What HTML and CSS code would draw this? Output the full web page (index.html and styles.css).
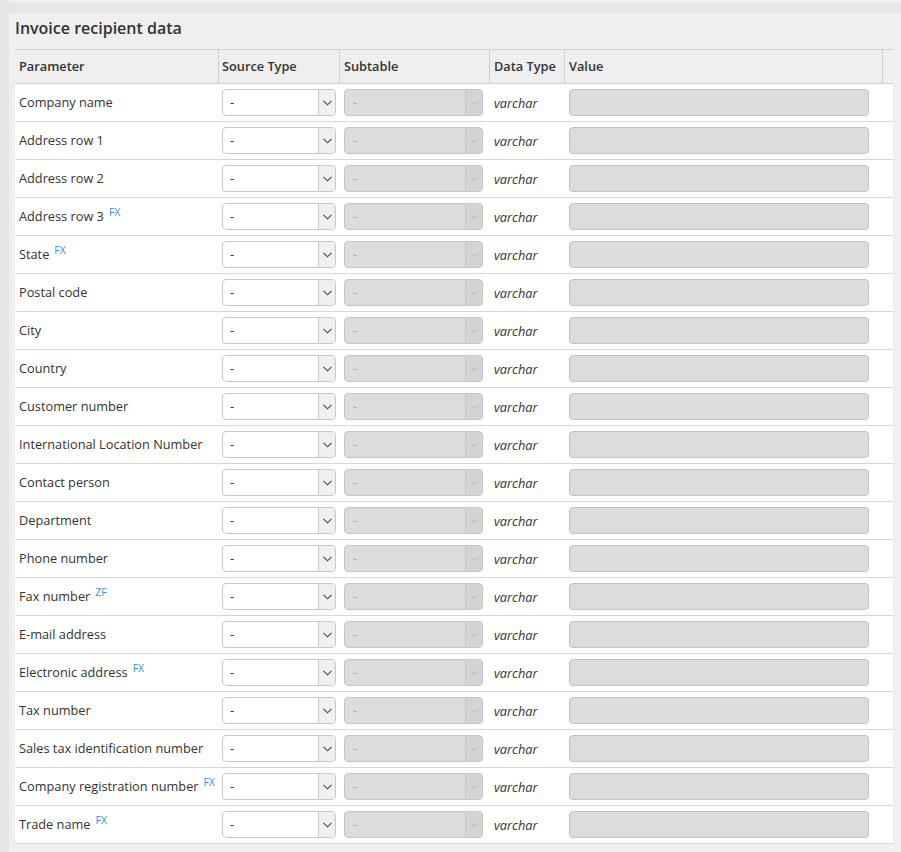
FILE: index.html
```html
<!DOCTYPE html>
<html>
<head>
<meta charset="utf-8">
<link rel="stylesheet" href="styles.css">
</head>
<body>
<div class="prev-panel"></div>
<div class="panel">
  <h2 class="title">Invoice recipient data</h2>
  <div class="table">
    <div class="row head">
      <div class="cell">Parameter</div>
      <div class="cell">Source Type</div>
      <div class="cell">Subtable</div>
      <div class="cell">Data Type</div>
      <div class="cell">Value</div>
      <div class="cell"></div>
    </div>
    <div id="rows"></div>
  </div>
</div>
<script src="script.js"></script>
</body>
</html>
```
FILE: styles.css
```css
html, body { margin: 0; padding: 0; }
body {
  background: #e6e6e6;
  font-family: "Open Sans", "Liberation Sans", sans-serif;
  font-size: 12.75px;
  color: #333;
  width: 901px;
  height: 852px;
  overflow: hidden;
}
.prev-panel {
  margin-left: 9px;
  height: 3px;
  background: #f0f0f0;
}
.panel {
  margin: 10px 0 0 9px;
  background: #efefef;
  border-top-left-radius: 4px;
  padding: 0 8px 12px 6px;
}
.title {
  margin: 0;
  padding: 4px 0 0 0;
  height: 32px;
  font-size: 16px;
  font-weight: 600;
  color: #333;
  line-height: 22px;
}
.table { width: 878px; }
.row {
  display: grid;
  grid-template-columns: 203px 121px 150px 75px 318px 11px;
  height: 38px;
  background: #fff;
  border-bottom: 1px solid #d6d6d6;
  box-sizing: border-box;
}
.row.head {
  height: 35px;
  background: #efefef;
  border-top: 1px solid #cfcfcf;
  border-bottom: 1px solid #cfcfcf;
  font-weight: 600;
}
.cell {
  display: flex;
  align-items: center;
  padding-left: 4px;
  box-sizing: border-box;
  white-space: nowrap;
}
.head .cell {
  border-left: 1px solid #cfcfcf;
  padding-left: 3px;
  padding-bottom: 2px;
}
.head .cell:first-child { border-left: none; padding-left: 4px; }
.row .cell:nth-child(3), .row .cell:nth-child(5) { padding-left: 5px; }
.row .cell:nth-child(4) { padding-left: 5px; }
.head .cell:nth-child(3), .head .cell:nth-child(4), .head .cell:nth-child(5) { padding-left: 4px; }
.row .cell.name { padding-bottom: 2px; }
.sup {
  color: #3a8ee0;
  font-size: 10.5px;
  margin-left: 5px;
  position: relative;
  top: -4px;
}
.select {
  display: flex;
  height: 27px;
  box-sizing: border-box;
  border: 1px solid #c8c8c8;
  border-radius: 4px;
  background: #fff;
  overflow: hidden;
}
.select .val {
  flex: 1;
  padding-left: 7px;
  line-height: 24px;
  color: #333;
}
.select .arrow {
  width: 16px;
  border-left: 1px solid #c8c8c8;
  background: #f0f0f0;
  display: flex;
  align-items: center;
  justify-content: center;
}
.src { width: 114px; }
.sub { width: 139px; background: #dcdcdc; border-color: #c6c6c6; }
.sub .val { color: #a8a8a8; padding-left: 8px; }
.sub .arrow { background: #d4d4d4; border-left-color: #c6c6c6; }
.dtype { font-style: italic; }
.value {
  width: 300px;
  height: 27px;
  box-sizing: border-box;
  border: 1px solid #c3c3c3;
  border-radius: 4px;
  background: #dcdcdc;
}
```
FILE: script.js
```js
var names = [
  ["Company name"], ["Address row 1"], ["Address row 2"], ["Address row 3", "FX"],
  ["State", "FX"], ["Postal code"], ["City"], ["Country"], ["Customer number"],
  ["International Location Number"], ["Contact person"], ["Department"],
  ["Phone number"], ["Fax number", "ZF"], ["E-mail address"], ["Electronic address", "FX"],
  ["Tax number"], ["Sales tax identification number"], ["Company registration number", "FX"],
  ["Trade name", "FX"]
];
var chevDark = '<svg width="9" height="6" viewBox="0 0 9 6"><path d="M0.5 0.8 L4.5 4.8 L8.5 0.8" fill="none" stroke="#444" stroke-width="1.1"/></svg>';
var chevLight = '<svg width="9" height="6" viewBox="0 0 9 6"><path d="M0.5 0.8 L4.5 4.8 L8.5 0.8" fill="none" stroke="#b5b5b5" stroke-width="1"/></svg>';
var html = "";
names.forEach(function (n) {
  html += '<div class="row">' +
    '<div class="cell name">' + n[0] + (n[1] ? '<span class="sup">' + n[1] + '</span>' : '') + '</div>' +
    '<div class="cell"><div class="select src"><span class="val">-</span><span class="arrow">' + chevDark + '</span></div></div>' +
    '<div class="cell"><div class="select sub"><span class="val">-</span><span class="arrow">' + chevLight + '</span></div></div>' +
    '<div class="cell dtype">varchar</div>' +
    '<div class="cell"><div class="value"></div></div>' +
    '<div class="cell"></div>' +
    '</div>';
});
document.getElementById("rows").innerHTML = html;
```
